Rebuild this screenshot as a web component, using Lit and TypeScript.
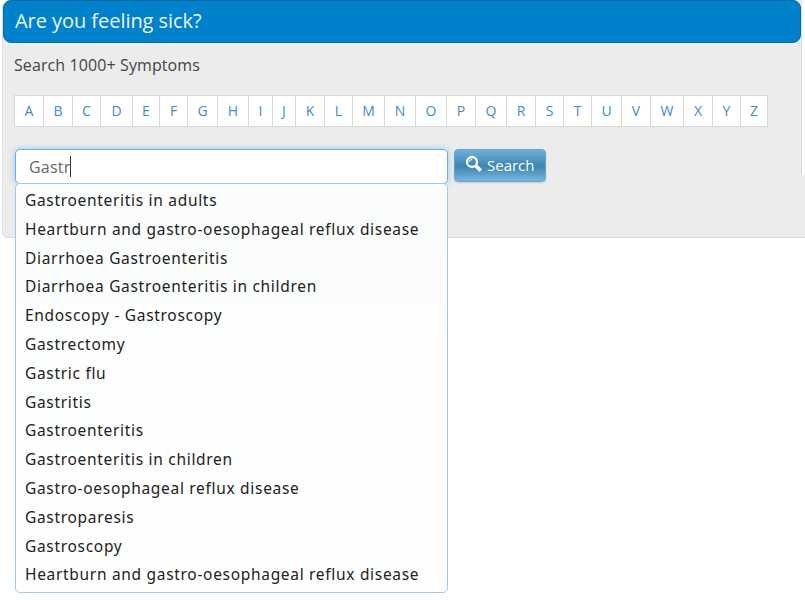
import { LitElement, html, css } from "lit";
import { customElement, property } from "lit/decorators.js";

const LETTERS: [string, number][] = [
  ["A", 29], ["B", 29], ["C", 28], ["D", 32], ["E", 27], ["F", 28], ["G", 30],
  ["H", 31], ["I", 24], ["J", 23], ["K", 29], ["L", 28], ["M", 32], ["N", 31],
  ["O", 31], ["P", 29], ["Q", 31], ["R", 29], ["S", 28], ["T", 28], ["U", 30],
  ["V", 29], ["W", 33], ["X", 29], ["Y", 28], ["Z", 27],
];

const SUGGESTIONS = [
  "Gastroenteritis in adults",
  "Heartburn and gastro-oesophageal reflux disease",
  "Diarrhoea Gastroenteritis",
  "Diarrhoea Gastroenteritis in children",
  "Endoscopy - Gastroscopy",
  "Gastrectomy",
  "Gastric flu",
  "Gastritis",
  "Gastroenteritis",
  "Gastroenteritis in children",
  "Gastro-oesophageal reflux disease",
  "Gastroparesis",
  "Gastroscopy",
  "Heartburn and gastro-oesophageal reflux disease",
];

@customElement("letter-index")
export class LetterIndex extends LitElement {
  static styles = css`
    :host { display: block; }
    .row { display: flex; height: 32px; width: max-content; box-sizing: border-box;
      border: 1px solid #dadada; border-left: 0; background: #fff; }
    .cell { box-sizing: border-box; border-left: 1px solid #dadada; text-align: center;
      font-size: 14px; line-height: 30px; color: #428bca; }
  `;
  render() {
    return html`<div class="row">
      ${LETTERS.map(([l, w]) => html`<a class="cell" style="width:${w}px">${l}</a>`)}
    </div>`;
  }
}

@customElement("suggestion-list")
export class SuggestionList extends LitElement {
  @property({ attribute: false }) items: string[] = [];
  static styles = css`
    :host { display: block; box-sizing: border-box; border: 1px solid #a3c8e4;
      border-radius: 5px; background: linear-gradient(#fbfdfd, #fefefe 90%, #fff); padding: 2px 0 3px 9px; }
    .item { height: 28.8px; line-height: 28.8px; white-space: nowrap; color: #222;
      font-family: "Noto Sans", "Liberation Sans", sans-serif; font-size: 15.5px; letter-spacing: 0.69px;
      font-variant-ligatures: none; }
  `;
  render() {
    return this.items.map((t) => html`<div class="item">${t}</div>`);
  }
}

@customElement("app-root")
export class AppRoot extends LitElement {
  static styles = css`
    :host { display: block; position: relative; width: 805px; height: 600px; overflow: hidden;
      background: #fff; font-family: "Open Sans", "Noto Sans", sans-serif; }
    .panel { box-sizing: border-box; height: 238px; margin-left: 2px; padding-left: 1px;
      background: #ececec; border-left: 1px solid #e0e0e0; border-bottom: 1px solid #dcdcdc;
      border-radius: 8px 0 0 6px; }
    .notch { position: absolute; right: 0; top: 0; width: 4px; height: 175px; box-sizing: border-box;
      background: #fff; border-left: 1px solid #dedede; }
    .title { position: relative; z-index: 1; box-sizing: border-box; width: 798px; height: 43px;
      margin-left: -1px; padding-left: 11px; background: #0081cc; border: 1px solid #0069a8;
      border-radius: 8px; box-shadow: 0 1px 0 #f8f8f8; color: #edf6fc; font-size: 20px;
      font-weight: 400; line-height: 40px; letter-spacing: -0.05px; }
    .body { padding-left: 10px; }
    .lead { height: 52px; line-height: 45px; font-size: 16px; letter-spacing: 0.1px; color: #444; }
    .search { display: flex; gap: 6px; margin-top: 22px; padding-left: 1px; }
    .field { position: relative; z-index: 2; width: 433px; height: 34px; }
    .input { box-sizing: border-box; display: flex; align-items: center; height: 35px; padding-left: 13px;
      border: 1px solid #66afe9; border-radius: 5px; background: #fff; color: #666; font-size: 16px;
      letter-spacing: 0.2px; box-shadow: 0 0 6px rgba(102, 175, 233, 0.6); }
    .caret { width: 1px; height: 21px; background: #333; }
    .menu { position: absolute; left: 0; top: 34px; width: 433px; height: 410px; }
    .button { display: flex; align-items: center; box-sizing: border-box; width: 92px; height: 33px;
      padding: 0 0 2px 10px; gap: 4px; border: 1px solid #67a6cd; border-radius: 4px; color: #fff; font-size: 15px;
      background: linear-gradient(#6fb0d9, #4089b5 48%, #3f87b2 55%, #77b7df);
      box-shadow: 0 1px 2px rgba(0, 0, 0, 0.15); }
    .icon { width: 18px; height: 18px; margin-top: -2px; flex: none; }
  `;
  render() {
    return html`
      <div class="panel">
        <div class="title">Are you feeling sick?</div>
        <div class="body">
          <div class="lead">Search 1000+ Symptoms</div>
          <letter-index></letter-index>
          <div class="search">
            <div class="field">
              <div class="input"><span>Gastr</span><span class="caret"></span></div>
              <suggestion-list class="menu" .items=${SUGGESTIONS}></suggestion-list>
            </div>
            <div class="button">
              <svg class="icon" viewBox="0 0 18 18" fill="none" stroke="#fff">
                <circle cx="7" cy="7" r="5" stroke-width="2.3" />
                <path d="M4.5 6.8a2.5 2.5 0 0 1 2.5-2.3" stroke-width="1" />
                <path d="M10.8 10.8l5 4.8" stroke-width="3.6" />
              </svg>
              <span>Search</span>
            </div>
          </div>
        </div>
      </div>
      <div class="notch"></div>
    `;
  }
}
